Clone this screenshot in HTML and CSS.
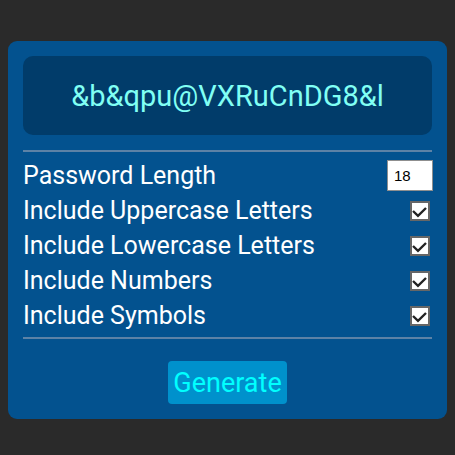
FILE: index.html
```html
<!DOCTYPE html>
<html>
<head>
<meta charset="utf-8">
<link rel="stylesheet" href="styles.css">
</head>
<body>
<div class="card">
  <div class="display">&amp;b&amp;qpu@VXRuCnDG8&amp;l</div>
  <hr class="sep sep-top">
  <div class="options">
    <label class="row"><span>Password Length</span><input class="num" type="number" value="18"></label>
    <label class="row"><span>Include Uppercase Letters</span><input class="chk" type="checkbox" checked></label>
    <label class="row"><span>Include Lowercase Letters</span><input class="chk" type="checkbox" checked></label>
    <label class="row"><span>Include Numbers</span><input class="chk" type="checkbox" checked></label>
    <label class="row"><span>Include Symbols</span><input class="chk" type="checkbox" checked></label>
  </div>
  <hr class="sep sep-bottom">
  <div class="actions"><button class="gen">Generate</button></div>
</div>
</body>
</html>
```
FILE: styles.css
```css
html, body {
  margin: 0;
  background: #2a2a2a;
}
body {
  padding: 41px 8px 0;
  font-family: Roboto, "Liberation Sans", sans-serif;
}
.card {
  background: #03528f;
  border-radius: 9px;
  padding: 15px;
  display: flex;
  flex-direction: column;
}
.display {
  background: #013c6a;
  border-radius: 10px;
  height: 79px;
  display: flex;
  align-items: center;
  justify-content: center;
  color: #80fff4;
  font-size: 29px;
}
.sep {
  border: 0;
  height: 2px;
  background: #5d82a6;
  margin: 0;
}
.sep-top { margin-top: 15px; margin-bottom: 6px; }
.sep-bottom { margin-top: 4px; margin-bottom: 22px; }
.options {
  display: flex;
  flex-direction: column;
}
.row {
  display: flex;
  align-items: center;
  justify-content: space-between;
  height: 35px;
  color: #ffffff;
  font-size: 25px;
}
.num {
  box-sizing: border-box;
  width: 46px;
  height: 31px;
  border: 1px solid #8f8f8f;
  background: #fff;
  font-family: Arial, "Liberation Sans", sans-serif;
  font-size: 15px;
  padding: 0 6px;
  margin: 0 -1px 0 0;
  color: #000;
  -moz-appearance: textfield;
}
.num::-webkit-inner-spin-button,
.num::-webkit-outer-spin-button {
  -webkit-appearance: none;
  margin: 0;
}
.chk {
  -webkit-appearance: none;
  appearance: none;
  box-sizing: border-box;
  width: 20px;
  height: 20px;
  margin: 0 2px 0 0;
  border: 2px solid #666;
  background: #fff url("data:image/svg+xml,%3Csvg xmlns='http://www.w3.org/2000/svg' viewBox='0 0 16 16'%3E%3Cpath d='M1 8 L6 12.8 L14 5' fill='none' stroke='%23222' stroke-width='2.4'/%3E%3C/svg%3E") 0 0 / 16px 16px no-repeat;
}
.actions {
  display: flex;
  justify-content: center;
}
.gen {
  background: #0091cc;
  color: #00ffff;
  border: 0;
  border-radius: 4px;
  height: 43px;
  padding: 0 5px;
  font-family: Roboto, "Liberation Sans", sans-serif;
  font-size: 27px;
}
```
